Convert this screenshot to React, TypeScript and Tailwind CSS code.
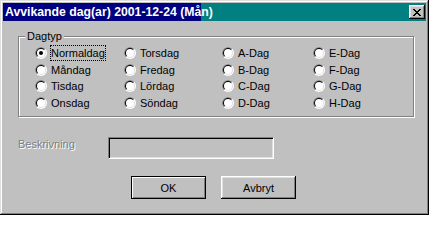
import React from "react";

function Radio({ checked }: { checked?: boolean }) {
  return (
    <svg width="12" height="12" viewBox="0 0 12 12" className="shrink-0">
      <circle cx="6" cy="6" r="6" fill="#ffffff" />
      <path d="M1.757 10.243 A6 6 0 0 1 10.243 1.757 Z" fill="#808080" />
      <circle cx="6" cy="6" r="5" fill="#dfdfdf" />
      <path d="M2.464 9.536 A5 5 0 0 1 9.536 2.464 Z" fill="#000000" />
      <circle cx="6" cy="6" r="4" fill="#ffffff" />
      {checked && <circle cx="6" cy="6" r="2" fill="#000000" />}
    </svg>
  );
}

function Item({ label, checked, focused }: { label: string; checked?: boolean; focused?: boolean }) {
  return (
    <div className="flex items-center h-[16.5px]">
      <Radio checked={checked} />
      <span
        className={
          "ml-[4px] leading-[14px] text-black " +
          (focused ? "outline outline-1 outline-dotted outline-black outline-offset-[0px]" : "")
        }
      >
        {label}
      </span>
    </div>
  );
}

export default function App() {
  const cols = [
    ["Normaldag", "Måndag", "Tisdag", "Onsdag"],
    ["Torsdag", "Fredag", "Lördag", "Söndag"],
    ["A-Dag", "B-Dag", "C-Dag", "D-Dag"],
    ["E-Dag", "F-Dag", "G-Dag", "H-Dag"],
  ];
  return (
    <div className="w-[429px] h-[215px] bg-[#c0c0c0] p-[3px] flex flex-col font-['Liberation_Sans',Arial,sans-serif] text-[11px] shadow-[inset_-1px_-1px_#000000,inset_1px_1px_#dfdfdf,inset_-2px_-2px_#808080,inset_2px_2px_#ffffff] overflow-hidden">
      {/* Title bar */}
      <div className="h-[18px] flex items-center bg-[linear-gradient(to_right,#000080_198px,#008080_198px)]">
        <span className="pl-[2px] text-white font-bold text-[12.25px] leading-[18px] whitespace-nowrap">
          Avvikande dag(ar) 2001-12-24 (Mån)
        </span>
        <div className="ml-auto mr-[1px] w-[16px] h-[14px] bg-[#c0c0c0] shadow-[inset_-1px_-1px_#000000,inset_1px_1px_#ffffff,inset_-2px_-2px_#808080,inset_2px_2px_#dfdfdf] flex items-center justify-center">
          <svg width="8" height="7" viewBox="0 0 8 7">
            <path
              d="M0 0h2v1h1v1h2v-1h1v-1h2v1h-1v1h-1v1h-1v1h1v1h1v1h1v1h-2v-1h-1v-1h-2v1h-1v1h-2v-1h1v-1h1v-1h1v-1h-1v-1h-1v-1h-1z"
              fill="#000"
            />
          </svg>
        </div>
      </div>

      {/* Group box */}
      <div className="relative ml-[15px] mt-[15px] w-[396px] h-[81px] border border-[#808080] shadow-[inset_1px_1px_#ffffff,1px_1px_#ffffff]">
        <span className="absolute left-[6px] top-[-8px] px-[2px] bg-[#c0c0c0] leading-[14px] text-black">
          Dagtyp
        </span>
        <div className="grid grid-cols-[89px_98px_91px_1fr] pl-[16px] pt-[8px]">
          {cols.map((col, ci) => (
            <div key={ci} className="flex flex-col">
              {col.map((label, ri) => (
                <Item
                  key={label}
                  label={label}
                  checked={ci === 0 && ri === 0}
                  focused={ci === 0 && ri === 0}
                />
              ))}
            </div>
          ))}
        </div>
      </div>

      {/* Beskrivning */}
      <div className="flex items-start mt-[20px] ml-[15px]">
        <span className="w-[90px] text-[#808080] [text-shadow:1px_1px_0_#ffffff] leading-[14px] mt-[0px]">
          Beskrivning
        </span>
        <div className="w-[166px] h-[22px] border border-t-[#808080] border-l-[#808080] border-r-white border-b-white shadow-[inset_1px_1px_#000000,inset_-1px_-1px_#dfdfdf] bg-[#c0c0c0]" />
      </div>

      {/* Buttons */}
      <div className="flex mt-[17px] ml-[128px] gap-[15px]">
        <button className="w-[75px] h-[23px] border border-black shadow-[inset_1px_1px_#ffffff,inset_-1px_-1px_#808080] bg-[#c0c0c0] text-black leading-[14px] flex items-center justify-center">
          OK
        </button>
        <button className="w-[75px] h-[23px] shadow-[inset_-1px_-1px_#000000,inset_1px_1px_#ffffff,inset_-2px_-2px_#808080,inset_2px_2px_#dfdfdf] bg-[#c0c0c0] text-black leading-[14px] flex items-center justify-center">
          Avbryt
        </button>
      </div>
    </div>
  );
}
